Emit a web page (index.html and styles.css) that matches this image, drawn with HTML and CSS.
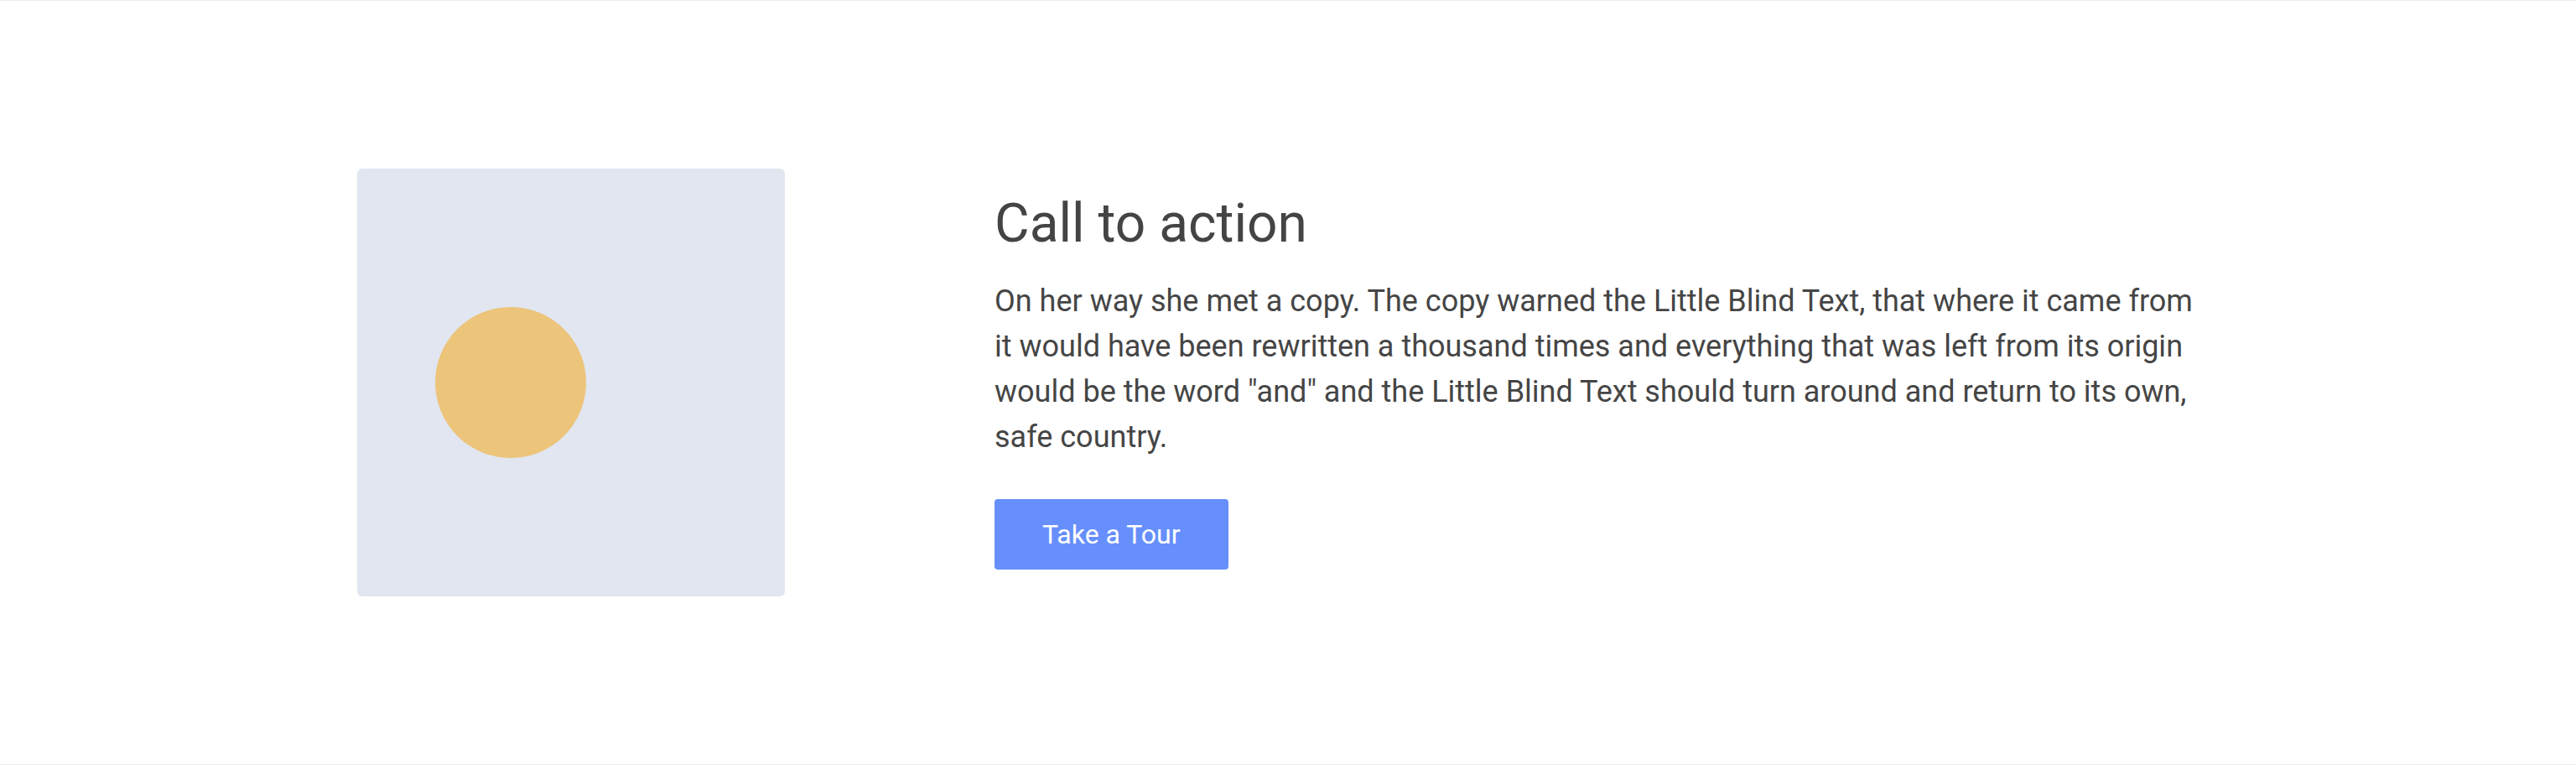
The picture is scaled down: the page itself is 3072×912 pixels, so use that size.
FILE: index.html
```html
<!DOCTYPE html>
<html lang="en">
<head>
<meta charset="utf-8">
<title>Call to action</title>
<link rel="stylesheet" href="styles.css">
</head>
<body>
<section class="cta">
  <div class="media">
    <div class="dot"></div>
  </div>
  <div class="content">
    <h2 class="title">Call to action</h2>
    <p class="text">On her way she met a copy. The copy warned the Little Blind Text, that where it came from it would have been rewritten a thousand times and everything that was left from its origin would be the word "and" and the Little Blind Text should turn around and return to its own, safe country.</p>
    <a class="btn" href="#">Take a Tour</a>
  </div>
</section>
</body>
</html>
```

FILE: styles.css
```css
html, body {
  margin: 0;
  padding: 0;
  background: #ffffff;
}

body {
  font-family: Roboto, "Liberation Sans", Arial, sans-serif;
  color: #444444;
}

.cta {
  box-sizing: border-box;
  height: 912px;
  border-top: 1px solid #ececec;
  border-bottom: 1px solid #ececec;
  display: flex;
  align-items: center;
  padding-left: 426px;
}

.media {
  flex: 0 0 auto;
  width: 510px;
  height: 510px;
  background: #e1e6f0;
  border-radius: 6px;
  display: flex;
  align-items: center;
  padding-left: 93px;
  box-sizing: border-box;
  margin-right: 250px;
}

.dot {
  width: 180px;
  height: 180px;
  border-radius: 50%;
  background: #ecc47a;
}

.content {
  width: 1440px;
  display: flex;
  flex-direction: column;
  align-items: flex-start;
  padding-bottom: 4px;
}

.title {
  margin: 0;
  font-size: 64px;
  font-weight: 400;
  line-height: 1.2;
  color: #444444;
}

.text {
  margin: 26px 0 0;
  font-size: 36px;
  line-height: 54px;
  color: #454545;
}

.btn {
  margin-top: 47px;
  height: 84px;
  display: flex;
  align-items: center;
  padding: 0 57px;
  background: #668ffb;
  color: #ffffff;
  border-radius: 4px;
  font-size: 32px;
  text-decoration: none;
}
```
